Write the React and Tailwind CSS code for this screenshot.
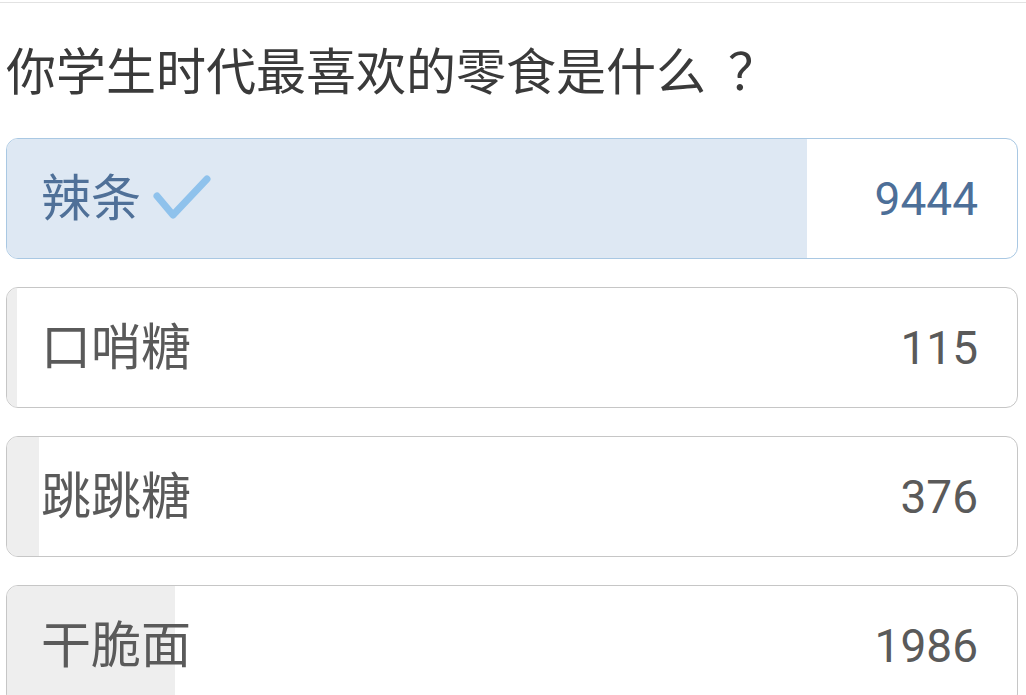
import React from 'react';

const options = [
  { label: '辣条', count: 9444, selected: true },
  { label: '口哨糖', count: 115 },
  { label: '跳跳糖', count: 376 },
  { label: '干脆面', count: 1986 },
];

const total = options.reduce((sum, o) => sum + o.count, 0);

const Check = () => (
  <svg width="58" height="48" viewBox="0 0 58 48" className="ml-[12px]">
    <path
      d="M4 21 L20 40 L54 4"
      fill="none"
      stroke="#8fc2ec"
      strokeWidth="7"
      strokeLinecap="round"
      strokeLinejoin="round"
    />
  </svg>
);

const OptionRow = ({ option }) => {
  const pct = (option.count / total) * 100;
  const sel = option.selected;
  return (
    <div
      className={`relative h-[121px] rounded-[12px] border overflow-hidden bg-white ${
        sel ? 'border-[#a9c8e3]' : 'border-[#c6c6c6]'
      }`}
    >
      {/* 투표 비율 바 */}
      <div
        className={`absolute inset-y-0 left-0 ${sel ? 'bg-[#dee8f3]' : 'bg-[#eeeeee]'}`}
        style={{ width: `${pct}%` }}
      />
      <div className="relative flex items-center justify-between h-full pl-[34px] pr-[39px]">
        <div className="flex items-center">
          <span className={sel ? 'text-[#4f7098]' : 'text-[#5a5a5a]'}>{option.label}</span>
          {sel && <Check />}
        </div>
        <span className={`text-[46px] ${sel ? 'text-[#4d6f98]' : 'text-[#5a5a5a]'}`}>{option.count}</span>
      </div>
    </div>
  );
};

export default function App() {
  return (
    <div
      className="w-full h-[695px] overflow-hidden bg-white text-[50px] leading-[60px]"
      style={{ fontFamily: "Roboto, 'Noto Sans CJK SC', sans-serif" }}
    >
      <div className="mt-[2px] border-t border-[#e2e2e2]" />
      <div
        className="px-[6px] pt-[35px] pb-[40px] text-[#3a3a3a]"
        style={{ fontFamily: "'Noto Sans CJK SC', sans-serif" }}
      >
        你学生时代最喜欢的零食是什么<span className="pl-[22px]">？</span>
      </div>
      <div className="flex flex-col gap-[28px] pl-[6px] pr-[8px]">
        {options.map(o => (
          <OptionRow key={o.label} option={o} />
        ))}
      </div>
    </div>
  );
}
